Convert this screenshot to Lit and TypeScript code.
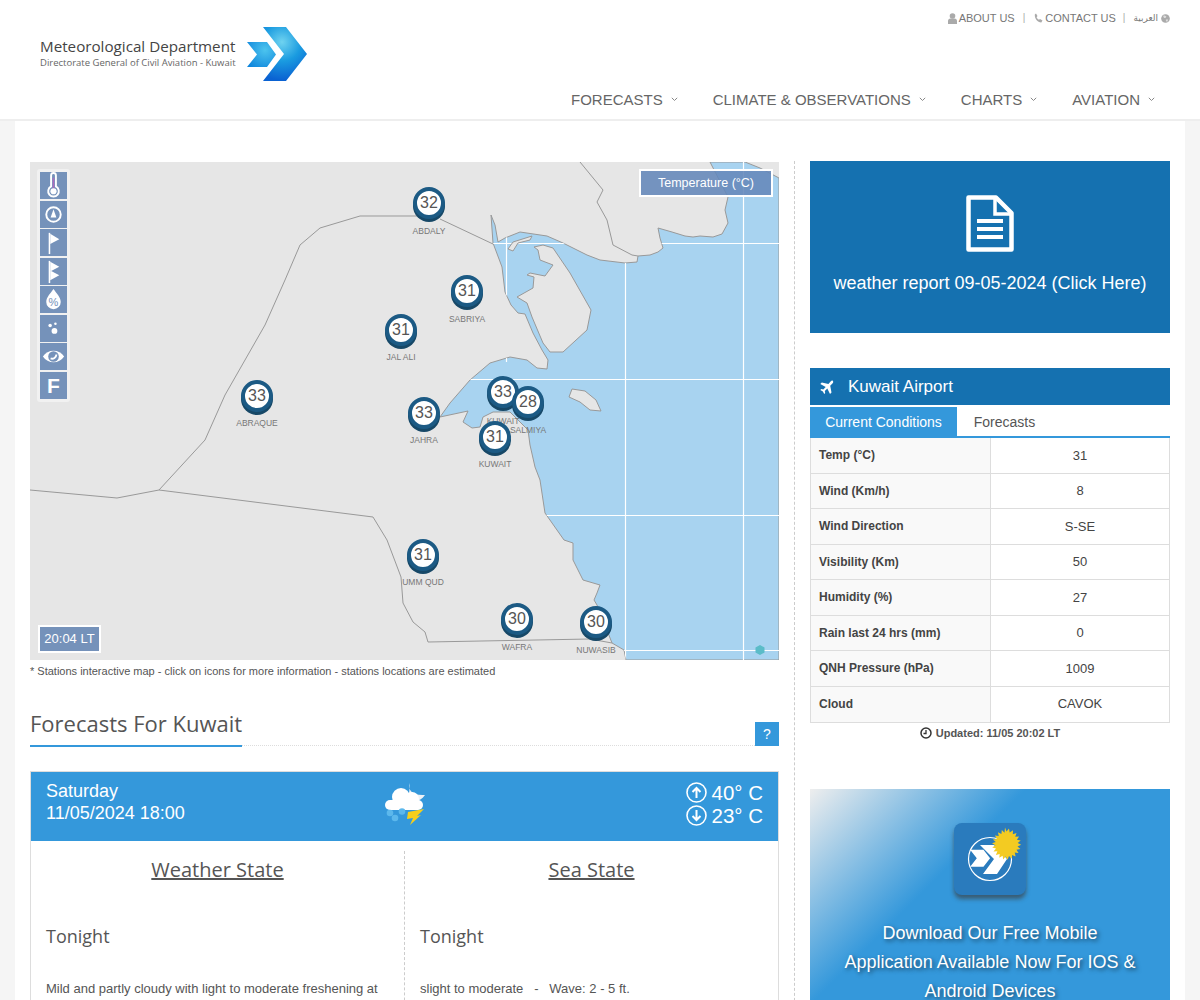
import { LitElement, html, css, svg } from "lit";
import { customElement } from "lit/decorators.js";

const pts = (a: number[][]) => a.map((p) => p.join(",")).join(" ");

const sea = [[710,162],[728,197],[725,210],[728,223],[722,234],[713,237],[700,236],[693,237],[685,236],[672,232],[658,228],[660,238],[663,248],[658,252],[650,255],[638,256],[637,262],[625,263],[600,260],[587,255],[563,243],[547,236],[520,232],[505,238],[498,242],[495,225],[491,215],[493,243],[502,267],[505,292],[511,305],[518,313],[525,314],[533,333],[542,350],[548,360],[547,369],[537,368],[527,360],[510,357],[490,363],[470,380],[450,403],[440,417],[468,411],[463,422],[472,428],[480,427],[483,417],[493,412],[510,412],[528,430],[530,445],[535,467],[540,480],[545,513],[564,540],[573,543],[573,560],[583,580],[600,585],[597,593],[594,600],[597,605],[612,643],[624,650],[626,660],[779,660],[779,178],[760,168],[745,162]];
const bubiyan = [[517,297],[527,303],[532,317],[543,343],[550,352],[563,352],[587,330],[591,310],[570,273],[553,248],[543,245],[534,247],[538,250],[540,260],[553,265],[545,276],[530,273],[527,275],[534,277],[533,288]];
const warbah = [[508,249],[513,242],[532,236],[530,240],[518,243],[513,251]];
const failaka = [[569,397],[572,389],[585,391],[596,400],[601,411],[590,410],[580,402]];
const lines = [
  [[440,219],[493,244]],
  [[430,216],[360,216],[320,228],[300,245],[285,280],[265,325],[225,395],[205,440],[159,490],[117,498],[30,490]],
  [[159,490],[373,517],[387,540],[401,577],[403,603],[413,622],[425,632],[428,642],[590,639],[612,643]],
  [[580,162],[603,190],[597,202],[607,220],[613,245],[632,255],[638,256]],
];

const markers: [number, number, string, string, number][] = [
  [429,204,"32","ABDALY",231],[467,292,"31","SABRIYA",319],[401,331,"31","JAL ALI",357],
  [257,397,"33","ABRAQUE",423],[424,414,"33","JAHRA",440],[503,393,"33","KUWAIT",421],
  [528,403,"28","SALMIYA",430],[495,438,"31","KUWAIT",464],[423,556,"31","UMM QUD",582],
  [517,620,"30","WAFRA",647],[596,623,"30","NUWASIB",650],
];

const rows = [["Temp (°C)","31"],["Wind (Km/h)","8"],["Wind Direction","S-SE"],["Visibility (Km)","50"],["Humidity (%)","27"],["Rain last 24 hrs (mm)","0"],["QNH Pressure (hPa)","1009"],["Cloud","CAVOK"]];

const tools = [
  svg`<path d="M11.5 3.5a2.5 2.5 0 0 1 5 0V15a5.5 5.5 0 1 1-5 0Z" fill="none" stroke="#fff" stroke-width="2"/><path d="M14 6v12" stroke="#b06ac0" stroke-width="1.5"/><circle cx="14" cy="20" r="3.2" fill="#fff"/>`,
  svg`<circle cx="14" cy="14" r="7.5" fill="none" stroke="#fff" stroke-width="2"/><path d="M14 8.5 17 17h-6Z" fill="#fff"/>`,
  svg`<path d="M9 4h1.6v22H9Z" fill="#fff"/><path d="M10.6 5 20 10.5l-9.4 5Z" fill="#fff"/>`,
  svg`<path d="M9 3h1.6v23H9Z" fill="#fff"/><path d="M10.6 4 20 9l-9.4 5ZM10.6 13l9.4 5-9.4 5Z" fill="#fff"/>`,
  svg`<path d="M14 3c3 4.5 7.5 8.5 7.5 13.5a7.5 7.5 0 0 1-15 0C6.5 11.5 11 7.5 14 3Z" fill="#fff"/>`,
  svg`<circle cx="10.5" cy="11" r="1.8" fill="#fff"/><circle cx="16" cy="9" r="1.3" fill="#fff"/><circle cx="15" cy="16.5" r="3" fill="#fff"/>`,
  svg`<path d="M3 14c5-8 17-8 22 0-5 8-17 8-22 0Z" fill="#fff"/><circle cx="14" cy="14" r="5.5" fill="#7592ba"/><path d="M11 16a4.5 4.5 0 0 0 6-4" fill="none" stroke="#fff" stroke-width="2"/>`,
];

@customElement("app-root")
export class AppRoot extends LitElement {
  static styles = css`
    :host { display: block; height: 1000px; overflow: hidden; background: #f5f5f5; font-family: "Liberation Sans", Arial, sans-serif; color: #555; }
    * { box-sizing: border-box; }
    header { height: 121px; background: #fff; border-bottom: 2px solid #eee; display: flex; justify-content: space-between; }
    .logo { display: flex; padding: 27px 0 0 40px; align-items: flex-start; }
    .logo-text { padding-top: 11px; width: 207px; color: #444; font-family: "Open Sans", sans-serif; }
    .logo-a { font-size: 15.2px; line-height: 18px; white-space: nowrap; margin-top: -1px; }
    .logo-b { font-size: 9.5px; line-height: 12px; color: #666; white-space: nowrap; margin-top: 2px; }
    .head-right { display: flex; flex-direction: column; align-items: flex-end; padding: 11px 30px 0 0; }
    .top { display: flex; align-items: center; font-size: 11px; line-height: 14px; color: #777; }
    .top svg { fill: #aaa; display: block; }
    .top a { display: flex; align-items: center; gap: 2px; }
    .top i { font-style: normal; color: #aaa; margin: 0 9px 0 8px; font-size: 10px; }
    .top i:nth-of-type(2) { margin: 0 8px 0 7px; }
    .ar { font-family: "DejaVu Sans", sans-serif; font-size: 9px; }
    .globe { margin-left: 1px; }
    nav { display: flex; margin-top: 66px; font-size: 15px; line-height: 18px; color: #666; }
    nav a { display: flex; align-items: center; margin-left: 50px; position: relative; }
    nav a:last-child { margin-right: 30px; }
    nav svg { position: absolute; right: -15px; top: 6px; }
    main { margin: 0 15px; min-height: 879px; background: #fff; padding: 40px 15px 0; display: flex; align-items: stretch; }
    .left { width: 765px; padding-right: 15px; border-right: 1px dashed #ccc; flex: none; }
    .right { width: 360px; margin-left: 15px; flex: none; }
    .map { position: relative; height: 498px; width: 749px; margin-top: 1px; background: #e6e6e6; overflow: hidden; }
    .map > svg { position: absolute; inset: 0; display: block; }
    .toolbar { position: absolute; left: 7px; top: 7px; width: 33px; padding: 3px; background: rgba(255,255,255,.45); border-radius: 3px; display: flex; flex-direction: column; gap: 1.5px; }
    .tool { width: 27px; height: 27px; background: #7592ba; display: flex; align-items: center; justify-content: center; color: #fff; position: relative; }
    .tool svg { display: block; width: 27px; height: 27px; }
    .tool b { font-size: 21px; line-height: 27px; }
    .pct { position: absolute; left: 0; right: 0; top: 10px; text-align: center; color: #7592ba; font-size: 11px; line-height: 12px; }
    .temp { position: absolute; left: 609px; top: 7px; width: 134px; height: 28px; background: rgba(100,135,185,.88); border: 2px solid #fff; color: #fff; font-size: 12.5px; line-height: 24px; text-align: center; }
    .time { position: absolute; left: 8px; top: 463px; width: 63px; height: 28px; background: #7592ba; border: 2px solid #fff; color: #fff; font-size: 13px; line-height: 24px; text-align: center; }
    .pin { position: absolute; width: 32px; height: 35px; margin-left: -16px; margin-top: -17px; }
    .pin::before { content: ""; position: absolute; left: 0; top: 3px; width: 32px; height: 32px; border-radius: 50%; background: #174867; }
    .pin span { position: absolute; left: 0; top: 0; width: 32px; height: 32px; border-radius: 50%; background: #fff; border: 4.5px solid #1c5a84; font-size: 16px; line-height: 23px; text-align: center; color: #555; }
    .pin-l { position: absolute; font-size: 8.5px; line-height: 10px; color: #777; transform: translateX(-50%); white-space: nowrap; }
    .note { font-size: 11px; line-height: 14px; margin-top: 4px; color: #555; height: 14px; white-space: nowrap; }
    .title-row { display: flex; margin-top: 31px; height: 37px; border-bottom: 1px dotted #ddd; align-items: flex-start; justify-content: space-between; }
    h2 { margin: 0; height: 38px; font: 400 22px/28px "Open Sans", sans-serif; color: #555; border-bottom: 2px solid #3498db; width: 212px; white-space: nowrap; }
    .help { width: 24px; height: 24px; background: #3498db; color: #fff; font-size: 14px; line-height: 24px; text-align: center; margin-top: 13px; }
    .card { margin-top: 25px; border: 1px solid #ddd; border-bottom: 0; }
    .card-head { height: 69px; background: #3498db; color: #fff; display: flex; align-items: flex-start; justify-content: space-between; padding: 8px 15px 0; position: relative; font-size: 18px; line-height: 22px; }
    .wx { position: absolute; left: 354px; top: 10px; display: block; }
    .hi { display: flex; flex-direction: column; align-items: flex-end; font-size: 20.5px; line-height: 23px; margin-top: 1px; }
    .hi div { display: flex; align-items: center; gap: 4px; }
    .body { display: grid; grid-template-columns: 373px 1fr; padding-top: 10px; }
    .col { padding: 0 15px; min-height: 200px; }
    .col + .col { border-left: 1px dashed #ccc; }
    h3 { margin: 0; font: 400 20px/38px "Open Sans", sans-serif; text-align: center; color: #555; text-decoration: underline; }
    h4 { margin: 32px 0 0; font: 400 18px/30px "Open Sans", sans-serif; color: #555; }
    .col p { margin: 28px 0 0; font-size: 13px; line-height: 20px; color: #555; white-space: pre-wrap; }
    .report { height: 172px; background: #1571b0; color: #fff; display: flex; flex-direction: column; align-items: center; padding-top: 34px; font-size: 18px; }
    .report svg { display: block; }
    .report div { margin-top: 20px; line-height: 22px; }
    .air { margin-top: 35px; height: 37px; background: #1571b0; color: #fff; display: flex; align-items: center; padding-left: 10px; font-size: 17px; gap: 14px; }
    .tabs { display: flex; margin-top: 2px; border-bottom: 2px solid #3498db; height: 31px; font-size: 14px; line-height: 30px; }
    .tab { width: 147px; text-align: center; color: #555; }
    .tab.on { background: #3498db; color: #fff; }
    .tab + .tab { width: 95px; }
    .tbl { border-left: 1px solid #ddd; border-right: 1px solid #ddd; border-bottom: 1px solid #ddd; }
    .tr { display: grid; grid-template-columns: 180px 1fr; height: 35.5px; border-bottom: 1px solid #ddd; }
    .tr:last-child { border-bottom: 0; }
    .th { background: #f9f9f9; border-right: 1px solid #ddd; font-size: 12px; font-weight: bold; color: #444; padding: 10px 8px 0; line-height: 14px; }
    .td { font-size: 13px; text-align: center; padding-top: 9.5px; line-height: 16px; color: #444; }
    .upd { display: flex; justify-content: center; align-items: center; gap: 4px; font-size: 11px; font-weight: bold; color: #555; margin-top: 2px; line-height: 16px; }
    .app { margin-top: 48px; height: 240px; background: linear-gradient(135deg, #eee 0, #3498db 36%); display: flex; flex-direction: column; align-items: center; padding-top: 34px; }
    .app-icon { width: 72px; height: 72px; border-radius: 8px; background: #2a7bbd; box-shadow: 0 4px 4px rgba(60,60,60,.65); display: block; }
    .app p { margin: 24px 0 0; color: #fff; font-size: 18px; line-height: 29px; text-align: center; text-shadow: 2px 2px 4px rgba(0,0,0,.55); width: 300px; }
  `;

  private chev() {
    return html`<svg width="7" height="5" viewBox="0 0 7 5"><path d="M.8.8 3.5 3.5 6.2.8" fill="none" stroke="#888" stroke-width="1"/></svg>`;
  }

  private map() {
    return html`<svg width="749" height="498" viewBox="30 162 749 498">
      <defs><clipPath id="s"><polygon points=${pts(sea)}></polygon></clipPath></defs>
      <polygon points=${pts(sea)} fill="#a8d3f0" stroke="#999" stroke-width="1"></polygon>
      <g clip-path="url(#s)" stroke="#fff" stroke-width="1.2">
        <path d="M480 243.5H779M430 379.5H779M500 515.5H779M600 650.5H779M506.5 230V362M625.5 255V660M743.500 162V660" fill="none"></path>
      </g>
      ${[bubiyan, warbah, failaka].map((p) => svg`<polygon points=${pts(p)} fill="#e6e6e6" stroke="#999" stroke-width="1"></polygon>`)}
      ${lines.map((p) => svg`<polyline points=${pts(p)} fill="none" stroke="#999" stroke-width="1"></polyline>`)}
      <path d="M760 645l4.5 2.5v5L760 655l-4.5-2.5v-5Z" fill="#5bbcc8"></path>
    </svg>`;
  }

  render() {
    return html`
      <header>
        <div class="logo">
          <div class="logo-text">
            <div class="logo-a">Meteorological Department</div>
            <div class="logo-b">Directorate General of Civil Aviation - Kuwait</div>
          </div>
          <svg width="61" height="54" viewBox="247 27 61 54">
            <defs>
              <radialGradient id="g1" gradientUnits="userSpaceOnUse" cx="282" cy="42" r="38"><stop offset="0" stop-color="#6fd3f0"></stop><stop offset=".5" stop-color="#1a9be0"></stop><stop offset="1" stop-color="#0a62d2"></stop></radialGradient>
              <radialGradient id="g2" gradientUnits="userSpaceOnUse" cx="265" cy="50" r="22"><stop offset="0" stop-color="#4cc4ee"></stop><stop offset="1" stop-color="#0e85dc"></stop></radialGradient>
            </defs>
            <path d="M247 42h20l9 12.5-9 12.5h-20l10-12.5Z" fill="url(#g2)"></path>
            <path d="M263 27h23l21 27-21 27h-23l21-27Z" fill="url(#g1)"></path>
          </svg>
        </div>
        <div class="head-right">
          <div class="top">
            <a><svg width="9" height="11" viewBox="0 0 9 11"><circle cx="4.5" cy="3" r="2.8"></circle><path d="M0 11V8c0-1.5 1-2.5 2.5-2.5h4C8 5.5 9 6.5 9 8v3Z"></path></svg>ABOUT US</a>
            <i>|</i>
            <a><svg width="9" height="10" viewBox="0 0 9 10"><path d="M2 .5 3.5 3 2.6 4.2c.5 1.3 1.2 2 2.4 2.6l1-.9L8.5 7.5 7.3 9.5C3.5 9.5.5 5.5.8 1.6Z"></path></svg>CONTACT US</a>
            <i>|</i>
            <a><span class="ar" dir="rtl">العربية</span><svg class="globe" width="9" height="9" viewBox="0 0 10 10"><circle cx="5" cy="5" r="4.8"></circle><path d="M3 1.5 6 2.5 5 4.5 3.5 4.5 2.5 3ZM5.5 6 8 6 7 8.5 5.5 8Z" fill="#ddd"></path></svg></a>
          </div>
          <nav>
            <a>FORECASTS${this.chev()}</a>
            <a>CLIMATE &amp; OBSERVATIONS${this.chev()}</a>
            <a>CHARTS${this.chev()}</a>
            <a>AVIATION${this.chev()}</a>
          </nav>
        </div>
      </header>
      <main>
        <div class="left">
          <div class="map">
            ${this.map()}
            ${markers.map(([x, y, n, l, ly]) => html`
              <div class="pin-l" style="left:${x - 30}px;top:${ly - 162 - 5}px">${l}</div>
              <div class="pin" style="left:${x - 30}px;top:${y - 162}px"><span>${n}</span></div>`)}
            <div class="toolbar">
              ${tools.map((t, i) => html`<div class="tool"><svg viewBox="0 0 28 28">${t}</svg>${i === 4 ? html`<div class="pct">%</div>` : ""}</div>`)}
              <div class="tool"><b>F</b></div>
            </div>
            <div class="temp">Temperature (°C)</div>
            <div class="time">20:04 LT</div>
          </div>
          <div class="note">* Stations interactive map - click on icons for more information - stations locations are estimated</div>
          <div class="title-row"><h2>Forecasts For Kuwait</h2><div class="help">?</div></div>
          <div class="card">
            <div class="card-head">
              <div>Saturday<br />11/05/2024 18:00</div>
              <svg class="wx" width="42" height="44" viewBox="0 0 42 44">
                <path d="M25 1C22 8 28 14 40 13 37 17 34 19 30 19L24 12Z" fill="#eef2f6"></path>
                <rect x="0" y="18" width="38" height="10" rx="5" fill="#fff"></rect>
                <circle cx="16" cy="15" r="9" fill="#fff"></circle>
                <circle cx="27" cy="17" r="7" fill="#fff"></circle>
                <path d="M23 30 39 27 32 34 36 33 25 43 28 36 22 37Z" fill="#f6cf1a"></path>
                <circle cx="5" cy="31" r="3.3" fill="#5cb8ec"></circle><circle cx="17" cy="29.5" r="3.3" fill="#5cb8ec"></circle><circle cx="10" cy="36" r="3.3" fill="#5cb8ec"></circle>
              </svg>
              <div class="hi">
                <div><svg width="21" height="21" viewBox="0 0 21 21"><circle cx="10.5" cy="10.5" r="9.5" fill="none" stroke="#fff" stroke-width="1.6"></circle><path d="M10.5 16V6M6.5 10l4-4 4 4" fill="none" stroke="#fff" stroke-width="2"></path></svg>40° C</div>
                <div><svg width="21" height="21" viewBox="0 0 21 21"><circle cx="10.5" cy="10.5" r="9.5" fill="none" stroke="#fff" stroke-width="1.6"></circle><path d="M10.5 5v10M6.5 11l4 4 4-4" fill="none" stroke="#fff" stroke-width="2"></path></svg>23° C</div>
              </div>
            </div>
            <div class="body">
              <div class="col"><h3>Weather State</h3><h4>Tonight</h4><p>Mild and partly cloudy with light to moderate freshening at</p></div>
              <div class="col"><h3>Sea State</h3><h4>Tonight</h4><p>slight to moderate   -   Wave: 2 - 5 ft.</p></div>
            </div>
          </div>
        </div>
        <div class="right">
          <div class="report">
            <svg width="48" height="57" viewBox="0 0 48 57"><path d="M2.5 2.5H30L45.5 18V54.5H2.5Z" fill="none" stroke="#fff" stroke-width="4.5" stroke-linejoin="round"></path><path d="M29 3V19H45" fill="none" stroke="#fff" stroke-width="3.5"></path><path d="M11 26H37M11 34H37M11 42H37" stroke="#fff" stroke-width="4"></path></svg>
            <div>weather report 09-05-2024 (Click Here)</div>
          </div>
          <div class="air">
            <svg width="14" height="14" viewBox="0 0 14 14"><path d="M12.8.7c.8.8.4 2-.4 2.8L10.2 5.700 11.5 12.500 10 14 7.300 8.600 4.800 11l.4 2-1 1-1.300-2.600L.3 10l1-1 2 .4 2.400-2.500L.3 4.100 1.800 2.600 8.400 4 10.600 1.600c.7-.8 1.400-1.600 2.200-.9Z" fill="#fff"></path></svg>
            <span>Kuwait Airport</span>
          </div>
          <div class="tabs"><div class="tab on">Current Conditions</div><div class="tab">Forecasts</div></div>
          <div class="tbl">
            ${rows.map(([a, b]) => html`<div class="tr"><div class="th">${a}</div><div class="td">${b}</div></div>`)}
          </div>
          <div class="upd">
            <svg width="12" height="12" viewBox="0 0 12 12"><circle cx="6" cy="6" r="5" fill="none" stroke="#333" stroke-width="1.5"></circle><path d="M6 3v3.5H3.500" fill="none" stroke="#333" stroke-width="1.3"></path></svg>
            Updated: 11/05 20:02 LT
          </div>
          <div class="app">
            <svg class="app-icon" viewBox="0 0 72 72">
              <circle cx="36" cy="36" r="21.5" fill="none" stroke="#fff" stroke-width="1.2"></circle>
              <path d="M17 27h14l7 9-7 9H17l7-9Z" fill="#fff" transform="translate(0 1) scale(.95)"></path>
              <path d="M26 22h14l13 14-10 15H29l11-15Z" fill="#fff"></path>
              <path d="M53 5l1.500 4 2.500-3 .7 4 3.300-2.300-.2 4 3.700-1.300-1.200 3.800 3.800-.3-2.200 3.300 3.800.8-3 2.500 3.400 1.800-3.600 1.700 2.900 2.600-3.900.6 2 3.400-3.800-.5.900 3.800-3.500-1.500-.3 3.900-2.800-2.700-1.400 3.700-2-3.300-2.400 3.100-.6-3.900-3.300 2.100.4-3.900-3.800 1 1.500-3.600-3.900.1 2.500-3-3.700-1 3.100-2.200-3.400-1.900 3.700-1.200-2.800-2.700 3.900-.4-1.900-3.400 3.900.4-.9-3.800 3.500 1.700.4-3.900 2.700 2.800Z" fill="#f3cb22" transform="translate(-2 -.5)"></path>
            </svg>
            <p>Download Our Free Mobile Application Available Now For IOS &amp; Android Devices</p>
          </div>
        </div>
      </main>
    `;
  }
}
